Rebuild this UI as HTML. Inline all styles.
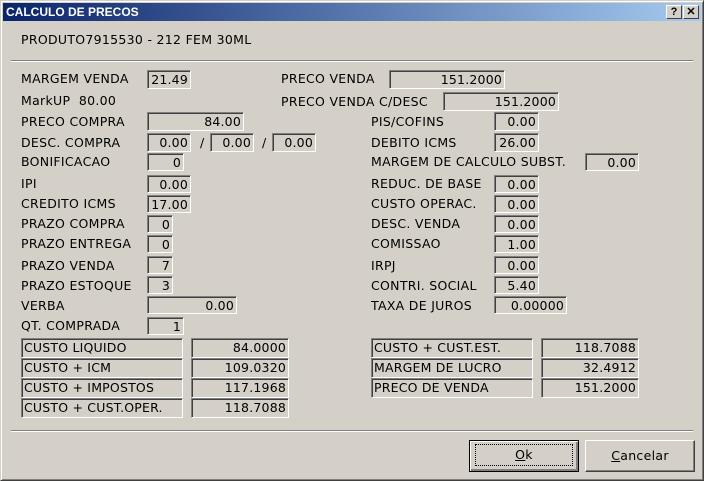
<!DOCTYPE html><html><head><meta charset="utf-8"><style>
*{margin:0;padding:0;box-sizing:border-box}
body{width:704px;height:481px;overflow:hidden;background:#d4d0c8;font-family:"DejaVu Sans","Liberation Sans",sans-serif;font-size:12.5px;letter-spacing:0.3px;color:#000;position:relative}
.win{position:absolute;left:0;top:0;width:704px;height:481px;border:1px solid;border-color:#d4d0c8 #404040 #404040 #d4d0c8;box-shadow:inset 1px 1px #fff,inset -1px -1px #808080}
.tb{position:absolute;left:3px;top:3px;width:698px;height:18px;background:linear-gradient(to right,#0a246a,#a6caf0);color:#fff;font:bold 12px "Liberation Sans",sans-serif;letter-spacing:0;line-height:18px;padding-left:3px}
.tbb{position:absolute;top:5px;width:16px;height:14px;background:#d4d0c8;border:1px solid;border-color:#fff #404040 #404040 #fff;font:bold 11px "Liberation Sans",sans-serif;letter-spacing:0;text-align:center;line-height:12px;color:#000}
.l{position:absolute;white-space:nowrap;line-height:16px;margin-top:1px}
.b{position:absolute;border:1px solid;border-color:#808080 #fff #fff #808080;box-shadow:inset 1px 1px #404040;text-align:right;padding-right:2px;line-height:17px;white-space:nowrap;letter-spacing:0.2px}
.lb{text-align:left;padding-left:2px;padding-right:0}
.hr{position:absolute;left:11px;width:682px;height:2px;border-top:1px solid #808080;border-bottom:1px solid #fff}
.btn{position:absolute;top:440px;width:110px;height:32px;background:#d4d0c8;border:1px solid;border-color:#fff #404040 #404040 #fff;box-shadow:inset -1px -1px #808080;text-align:center;line-height:29px;font-size:12.5px}
u{text-decoration:underline}
</style></head><body>
<div class="win"></div>
<div class="tb">CALCULO DE PRECOS</div>
<div class="tbb" style="left:666px">?</div>
<div class="tbb" style="left:683px">✕</div>
<div class="l" style="left:21px;top:31px">PRODUTO7915530 - 212 FEM 30ML</div>
<div class="hr" style="top:60px"></div>

<div class="l" style="left:21px;top:70px">MARGEM VENDA</div><div class="b" style="left:147px;top:70px;width:44px;height:19px">21.49</div>
<div class="l" style="left:21px;top:92px">MarkUP&nbsp; 80.00</div>
<div class="l" style="left:21px;top:113px">PRECO COMPRA</div><div class="b" style="left:147px;top:112px;width:97px;height:19px">84.00</div>
<div class="l" style="left:21px;top:134px">DESC. COMPRA</div>
<div class="b" style="left:147px;top:133px;width:44px;height:19px">0.00</div><div class="l" style="left:200px;top:134px">/</div>
<div class="b" style="left:210px;top:133px;width:44px;height:19px">0.00</div><div class="l" style="left:262px;top:134px">/</div>
<div class="b" style="left:272px;top:133px;width:44px;height:19px">0.00</div>
<div class="l" style="left:21px;top:153px">BONIFICACAO</div><div class="b" style="left:147px;top:153px;width:37px;height:18px">0</div>
<div class="l" style="left:21px;top:175px">IPI</div><div class="b" style="left:147px;top:175px;width:44px;height:18px">0.00</div>
<div class="l" style="left:21px;top:195px">CREDITO ICMS</div><div class="b" style="left:147px;top:195px;width:44px;height:18px">17.00</div>
<div class="l" style="left:21px;top:215px">PRAZO COMPRA</div><div class="b" style="left:147px;top:215px;width:26px;height:18px">0</div>
<div class="l" style="left:21px;top:235px">PRAZO ENTREGA</div><div class="b" style="left:147px;top:235px;width:26px;height:18px">0</div>
<div class="l" style="left:21px;top:257px">PRAZO VENDA</div><div class="b" style="left:147px;top:256px;width:26px;height:18px">7</div>
<div class="l" style="left:21px;top:277px">PRAZO ESTOQUE</div><div class="b" style="left:147px;top:276px;width:26px;height:18px">3</div>
<div class="l" style="left:21px;top:297px">VERBA</div><div class="b" style="left:147px;top:296px;width:90px;height:18px">0.00</div>
<div class="l" style="left:21px;top:317px">QT. COMPRADA</div><div class="b" style="left:147px;top:317px;width:37px;height:18px">1</div>

<div class="l" style="left:281px;top:70px">PRECO VENDA</div><div class="b" style="left:389px;top:70px;width:116px;height:19px">151.2000</div>
<div class="l" style="left:281px;top:93px">PRECO VENDA C/DESC</div><div class="b" style="left:443px;top:92px;width:116px;height:19px">151.2000</div>
<div class="l" style="left:371px;top:113px">PIS/COFINS</div><div class="b" style="left:494px;top:112px;width:45px;height:19px">0.00</div>
<div class="l" style="left:371px;top:134px">DEBITO ICMS</div><div class="b" style="left:494px;top:133px;width:45px;height:19px">26.00</div>
<div class="l" style="left:371px;top:153px">MARGEM DE CALCULO SUBST.</div><div class="b" style="left:585px;top:153px;width:54px;height:18px">0.00</div>
<div class="l" style="left:371px;top:175px">REDUC. DE BASE</div><div class="b" style="left:494px;top:175px;width:45px;height:18px">0.00</div>
<div class="l" style="left:371px;top:195px">CUSTO OPERAC.</div><div class="b" style="left:494px;top:195px;width:45px;height:18px">0.00</div>
<div class="l" style="left:371px;top:215px">DESC. VENDA</div><div class="b" style="left:494px;top:215px;width:45px;height:18px">0.00</div>
<div class="l" style="left:371px;top:235px">COMISSAO</div><div class="b" style="left:494px;top:235px;width:45px;height:18px">1.00</div>
<div class="l" style="left:371px;top:257px">IRPJ</div><div class="b" style="left:494px;top:256px;width:45px;height:18px">0.00</div>
<div class="l" style="left:371px;top:277px">CONTRI. SOCIAL</div><div class="b" style="left:494px;top:276px;width:45px;height:18px">5.40</div>
<div class="l" style="left:371px;top:297px">TAXA DE JUROS</div><div class="b" style="left:494px;top:296px;width:73px;height:18px">0.00000</div>

<div class="b lb" style="left:21px;top:338px;width:162px;height:20px">CUSTO LIQUIDO</div><div class="b" style="left:191px;top:338px;width:98px;height:20px">84.0000</div>
<div class="b lb" style="left:21px;top:358px;width:162px;height:20px">CUSTO + ICM</div><div class="b" style="left:191px;top:358px;width:98px;height:20px">109.0320</div>
<div class="b lb" style="left:21px;top:378px;width:162px;height:20px">CUSTO + IMPOSTOS</div><div class="b" style="left:191px;top:378px;width:98px;height:20px">117.1968</div>
<div class="b lb" style="left:21px;top:398px;width:162px;height:20px">CUSTO + CUST.OPER.</div><div class="b" style="left:191px;top:398px;width:98px;height:20px">118.7088</div>
<div class="b lb" style="left:371px;top:338px;width:162px;height:20px">CUSTO + CUST.EST.</div><div class="b" style="left:541px;top:338px;width:98px;height:20px">118.7088</div>
<div class="b lb" style="left:371px;top:358px;width:162px;height:20px">MARGEM DE LUCRO</div><div class="b" style="left:541px;top:358px;width:98px;height:20px">32.4912</div>
<div class="b lb" style="left:371px;top:378px;width:162px;height:20px">PRECO DE VENDA</div><div class="b" style="left:541px;top:378px;width:98px;height:20px">151.2000</div>

<div class="hr" style="top:430px"></div>
<div class="btn" style="left:469px;border:1px solid #000;box-shadow:inset 1px 1px #fff,inset -2px -2px #808080"><span style="display:inline-block;border:1px dotted #000;width:98px;height:22px;line-height:20px;margin-top:3px;vertical-align:top"><u>O</u>k</span></div>
<div class="btn" style="left:585px"><u>C</u>ancelar</div>
</body></html>
